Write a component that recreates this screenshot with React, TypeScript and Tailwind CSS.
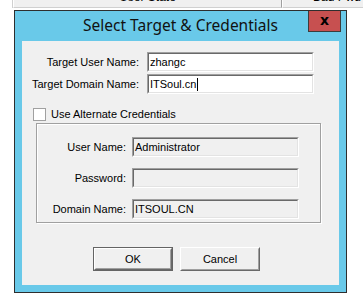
import React from "react";

const font = { fontFamily: '"Liberation Sans", Arial, sans-serif' };

function Sunken({ children, disabled = false, className = "" }: { children?: React.ReactNode; disabled?: boolean; className?: string }) {
  return (
    <div className={`h-[20px] w-[167px] border-t border-l border-t-[#a0a0a0] border-l-[#a0a0a0] border-b border-r border-b-white border-r-white ${className}`}>
      <div className={`h-full w-full border-t border-l border-t-[#696969] border-l-[#696969] border-b border-r border-b-[#e3e3e3] border-r-[#e3e3e3] ${disabled ? "bg-[#f0f0f0]" : "bg-white"} flex items-center pl-[1px] text-[11px] text-black`}>
        {children}
      </div>
    </div>
  );
}

function Btn({ children, def = false }: { children: React.ReactNode; def?: boolean }) {
  const inner = (
    <div className="h-full w-full border-t border-l border-t-white border-l-white border-b border-r border-b-[#696969] border-r-[#696969]">
      <div className="h-full w-full border-t border-l border-t-[#f0f0f0] border-l-[#f0f0f0] border-b border-r border-b-[#a0a0a0] border-r-[#a0a0a0] bg-[#f0f0f0] flex items-center justify-center text-[11px] text-black">
        {children}
      </div>
    </div>
  );
  return (
    <div className={`h-[24px] w-[80px] ${def ? "border border-[#646464]" : ""}`}>{inner}</div>
  );
}

export default function App() {
  return (
    <div className="w-[363px] h-[305px] bg-white overflow-hidden" style={font}>
      {/* background list header */}
      <div className="h-[9px] flex overflow-hidden">
        <div className="w-[13px] h-[8px] bg-white border-r border-[#d0d0d0]" />
        <div className="w-[269px] h-[8px] bg-[#f0f0f0] border-l border-white border-r border-r-[#a0a0a0] border-b border-b-[#d0d0d0] flex justify-center overflow-hidden">
          <span className="whitespace-nowrap text-[12px] leading-[12px] -mt-[9px] text-black">User State</span>
        </div>
        <div className="flex-1 h-[8px] bg-[#f0f0f0] border-l border-white border-b border-b-[#d0d0d0] overflow-hidden">
          <span className="block whitespace-nowrap pl-[30px] text-[12px] leading-[12px] -mt-[9px] text-black">Bad Pwd</span>
        </div>
      </div>

      {/* dialog */}
      <div className="ml-[14px] mt-[1px] w-[333px] h-[283px] border border-[#2e2e2e] bg-[#69c9e9] flex flex-col">
        <div className="relative h-[30px] flex items-center justify-center">
          <span className="text-[15.5px] text-[#111] -mt-[1px] whitespace-nowrap" style={{ fontFamily: '"Noto Sans", "Open Sans", sans-serif' }}>
            Select Target &amp; Credentials
          </span>
          <div className="absolute right-[5px] top-0 w-[33px] h-[21px] bg-[#c75050] border-l border-r border-b border-[#3c3c3c] flex items-center justify-center">
            <span className="text-[14px] font-bold text-black leading-none -mt-[2px]" style={{ fontFamily: '"DejaVu Sans", sans-serif' }}>x</span>
          </div>
        </div>

        <div className="mx-[7px] mb-[7px] flex-1 bg-[#f0f0f0] flex flex-col text-[11px] text-black">
          <div className="mt-[11px] flex flex-col gap-[2px]">
            <div className="flex items-center">
              <div className="w-[117px] text-right">Target User Name:</div>
              <Sunken className="ml-[8px]">zhangc</Sunken>
            </div>
            <div className="flex items-center">
              <div className="w-[117px] text-right">Target Domain Name:</div>
              <Sunken className="ml-[8px]">
                ITSoul.cn<span className="inline-block w-[1px] h-[13px] bg-black ml-[1px]" />
              </Sunken>
            </div>
          </div>

          <div className="mt-[14px] ml-[11px] flex items-center h-[13px]">
            <div className="w-[13px] h-[13px] border border-[#a0a0a0] bg-white" />
            <span className="ml-[5px]">Use Alternate Credentials</span>
          </div>

          <div className="mt-[2px] ml-[14px] w-[285px] h-[100px] border border-[#a0a0a0] shadow-[inset_1px_1px_0_#fff,1px_1px_0_#fff] flex flex-col gap-[11px] pt-[13px]">
            <div className="flex items-center">
              <div className="w-[89px] text-right">User Name:</div>
              <Sunken disabled className="ml-[6px]">Administrator</Sunken>
            </div>
            <div className="flex items-center">
              <div className="w-[89px] text-right">Password:</div>
              <Sunken disabled className="ml-[6px]" />
            </div>
            <div className="flex items-center">
              <div className="w-[89px] text-right">Domain Name:</div>
              <Sunken disabled className="ml-[6px]">ITSOUL.CN</Sunken>
            </div>
          </div>

          <div className="mt-[24px] ml-[71px] flex gap-[7px]">
            <Btn def>OK</Btn>
            <Btn>Cancel</Btn>
          </div>
        </div>
      </div>
    </div>
  );
}
